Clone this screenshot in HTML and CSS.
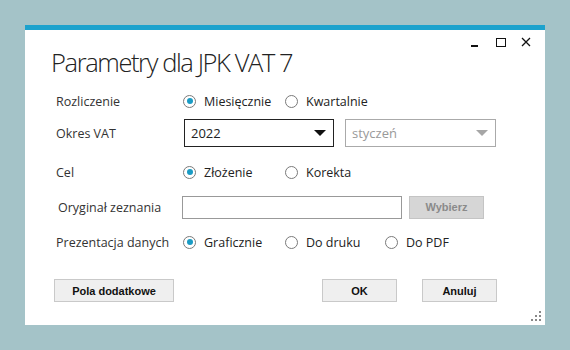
FILE: index.html
```html
<!DOCTYPE html>
<html>
<head>
  <title>Parametry dla JPK VAT 7</title>
  <link rel="stylesheet" href="styles.css">
</head>
<body>
  <div class="window">
    <div class="caption">
      <span class="ctl min"></span>
      <span class="ctl max"></span>
      <svg class="ctl close" viewBox="0 0 10 10"><path d="M1 1L9 9M9 1L1 9" stroke="#111" stroke-width="1.3"/></svg>
    </div>
    <h1 class="title">Parametry dla JPK VAT 7</h1>

    <div class="row r1">
      <div class="label">Rozliczenie</div>
      <div class="controls">
        <label class="radio on"><span class="dot"></span>Miesięcznie</label>
        <label class="radio"><span class="dot"></span>Kwartalnie</label>
      </div>
    </div>

    <div class="row r2">
      <div class="label">Okres VAT</div>
      <div class="controls">
        <div class="combo">2022<span class="arrow"></span></div>
        <div class="combo disabled">styczeń<span class="arrow"></span></div>
      </div>
    </div>

    <div class="row r3">
      <div class="label">Cel</div>
      <div class="controls">
        <label class="radio on"><span class="dot"></span>Złożenie</label>
        <label class="radio"><span class="dot"></span>Korekta</label>
      </div>
    </div>

    <div class="row r4">
      <div class="label indent">Oryginał zeznania</div>
      <div class="controls">
        <div class="textbox"></div>
        <button class="btn pick" disabled>Wybierz</button>
      </div>
    </div>

    <div class="row r5">
      <div class="label">Prezentacja danych</div>
      <div class="controls">
        <label class="radio on"><span class="dot"></span>Graficznie</label>
        <label class="radio"><span class="dot"></span>Do druku</label>
        <label class="radio"><span class="dot"></span>Do PDF</label>
      </div>
    </div>

    <div class="buttons">
      <button class="btn extra">Pola dodatkowe</button>
      <button class="btn ok">OK</button>
      <button class="btn cancel">Anuluj</button>
    </div>

    <svg class="grip" viewBox="0 0 10 10">
      <rect x="8" y="0" width="2" height="2" fill="#888"/>
      <rect x="4" y="4" width="2" height="2" fill="#888"/>
      <rect x="8" y="4" width="2" height="2" fill="#888"/>
      <rect x="0" y="8" width="2" height="2" fill="#888"/>
      <rect x="4" y="8" width="2" height="2" fill="#888"/>
      <rect x="8" y="8" width="2" height="2" fill="#888"/>
    </svg>
  </div>
</body>
</html>
```

FILE: styles.css
```css
html {
  background: #a4c3c8;
}
body {
  margin: 0;
  font-family: "Open Sans", sans-serif;
  font-size: 12.5px;
  color: #222;
}

/* DIALOG WINDOW */
.window {
  position: relative;
  margin: 25px 0 0 25px;
  width: 520px;
  height: 295px;
  background: #fff;
  border-top: 5px solid #1ca2cd;
}

.caption {
  display: flex;
  justify-content: flex-end;
  align-items: center;
  gap: 15px;
  height: 10px;
  padding: 7px 14px 0 0;
}
.ctl {
  display: block;
}
.min {
  width: 7px;
  height: 2px;
  margin-top: 7px;
  background: #111;
}
.max {
  width: 8px;
  height: 7px;
  border: 1.5px solid #111;
  margin-left: 3px;
}
.close {
  width: 10px;
  height: 10px;
}

.title {
  margin: 0;
  padding: 2px 0 0 26px;
  font-size: 25.5px;
  font-weight: 300;
  color: #222;
  line-height: 26px;
  letter-spacing: -1.4px;
}

/* FORM ROWS */
.row {
  display: flex;
  align-items: center;
  height: 28px;
  padding-left: 31px;
}
.r1 { margin-top: 12px; }
.r2 { margin-top: 4px; }
.r3 { margin-top: 11px; }
.r4 { margin-top: 7px; }
.r5 { margin-top: 7px; }

.label {
  width: 127px;
  flex: none;
  color: #333;
}
.label.indent {
  padding-left: 2px;
  width: 125px;
}
.controls {
  display: flex;
  align-items: center;
}

/* RADIO BUTTONS */
.radio {
  display: flex;
  align-items: center;
  width: 102px;
}
.r5 .radio + .radio {
  width: 100px;
}
.radio .dot {
  position: relative;
  width: 11px;
  height: 11px;
  margin-right: 8px;
  border: 1px solid #7a7a7a;
  border-radius: 50%;
}
.radio.on .dot:after {
  content: "";
  position: absolute;
  top: 2.5px;
  left: 2.5px;
  width: 6px;
  height: 6px;
  border-radius: 50%;
  background: #1a9bc4;
}

/* COMBO BOXES */
.combo {
  position: relative;
  box-sizing: border-box;
  width: 150px;
  height: 28px;
  margin-left: 1px;
  padding: 0 6px;
  border: 1px solid #222;
  line-height: 26px;
  font-size: 13px;
}
.combo.disabled {
  width: 151px;
  margin-left: 11px;
  border-color: #aaa;
  color: #999;
}
.combo .arrow {
  position: absolute;
  right: 7px;
  top: 10px;
  border-left: 6px solid transparent;
  border-right: 6px solid transparent;
  border-top: 6px solid #111;
}
.combo.disabled .arrow {
  border-top-color: #a6a6a6;
}

.textbox {
  box-sizing: border-box;
  width: 220px;
  height: 23px;
  margin-left: -1px;
  border: 1px solid #999;
}

/* BUTTONS */
.btn {
  box-sizing: border-box;
  height: 23px;
  border: 1px solid #c9c9c9;
  background: #efefef;
  font-family: "Liberation Sans", sans-serif;
  font-size: 11px;
  font-weight: bold;
  color: #111;
  padding: 0;
}
.btn.pick {
  width: 75px;
  margin-left: 7px;
  background: #d6d6d6;
  border-color: #c4c4c4;
  color: #8a8a8a;
}

.buttons {
  display: flex;
  margin-top: 23px;
  padding-left: 29px;
}
.extra { width: 120px; }
.ok { width: 75px; margin-left: 148px; }
.cancel { width: 75px; margin-left: 25px; }

.grip {
  position: absolute;
  right: 4px;
  bottom: 4px;
  width: 10px;
  height: 10px;
}
```
